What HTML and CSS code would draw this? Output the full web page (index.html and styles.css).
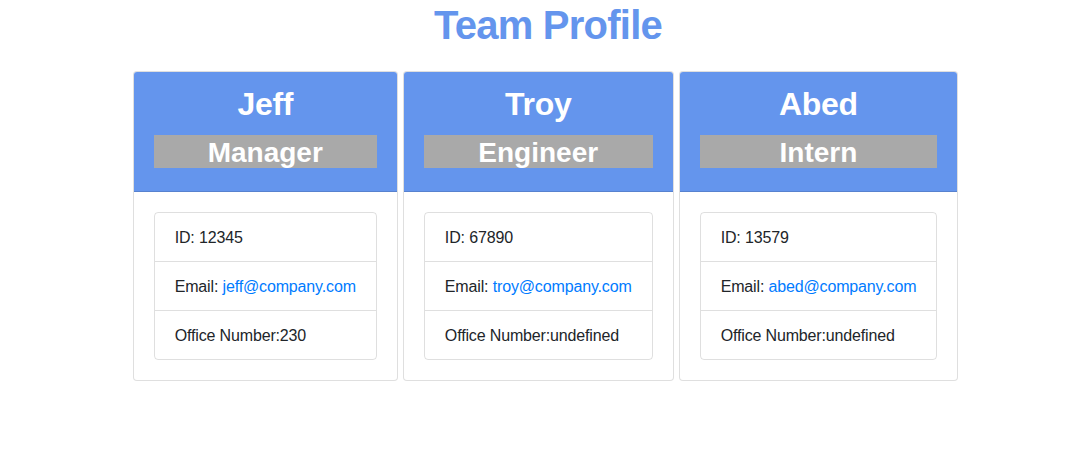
FILE: index.html
```html
<!DOCTYPE html>
<html lang="en">
<head>
<meta charset="UTF-8">
<title>Team Profile</title>
<link rel="stylesheet" href="styles.css">
</head>
<body>
<h1 class="title">Team Profile</h1>
<div class="team">
  <div class="card">
    <div class="card-header">
      <h2 class="name">Jeff</h2>
      <h3 class="role">Manager</h3>
    </div>
    <div class="card-body">
      <ul class="list">
        <li class="item">ID: 12345</li>
        <li class="item">Email: <a class="link" href="#">jeff@company.com</a></li>
        <li class="item">Office Number:230</li>
      </ul>
    </div>
  </div>
  <div class="card">
    <div class="card-header">
      <h2 class="name">Troy</h2>
      <h3 class="role">Engineer</h3>
    </div>
    <div class="card-body">
      <ul class="list">
        <li class="item">ID: 67890</li>
        <li class="item">Email: <a class="link" href="#">troy@company.com</a></li>
        <li class="item">Office Number:undefined</li>
      </ul>
    </div>
  </div>
  <div class="card">
    <div class="card-header">
      <h2 class="name">Abed</h2>
      <h3 class="role">Intern</h3>
    </div>
    <div class="card-body">
      <ul class="list">
        <li class="item">ID: 13579</li>
        <li class="item">Email: <a class="link" href="#">abed@company.com</a></li>
        <li class="item">Office Number:undefined</li>
      </ul>
    </div>
  </div>
</div>
</body>
</html>
```
FILE: styles.css
```css
* { box-sizing: border-box; }
body {
  margin: 0;
  font-family: "Liberation Sans", Arial, sans-serif;
  font-size: 16px;
  line-height: 1.5;
  color: #212529;
  background: #fff;
}
.title {
  margin: 0 0 22px;
  padding: 1px 0 0 8px;
  height: 49px;
  text-align: center;
  font-size: 40px;
  line-height: 48px;
  font-weight: 700;
  color: #6495ed;
  letter-spacing: -0.75px;
}
.team {
  display: flex;
  justify-content: center;
  align-items: flex-start;
  gap: 5px;
  padding-left: 3px;
}
.card {
  border: 1px solid rgba(0,0,0,.125);
  border-radius: 4px;
  background: #fff;
}
.card-header {
  background: #6495ed;
  padding: 13px 20px 11px;
  border-bottom: 1px solid rgba(0,0,0,.125);
  border-radius: 3px 3px 0 0;
  text-align: center;
  color: #fff;
}
.name {
  margin: 0 0 12px;
  font-size: 32px;
  line-height: 38px;
  font-weight: 700;
  letter-spacing: -0.3px;
}
.role {
  margin: 0 0 12px;
  padding-top: 2px;
  height: 33px;
  background: #a9a9a9;
  font-size: 28px;
  line-height: 31px;
  font-weight: 700;
}
.card-body {
  padding: 20px;
}
.list {
  list-style: none;
  margin: 0;
  padding: 0;
  border: 1px solid rgba(0,0,0,.125);
  border-radius: 4px;
}
.item {
  padding: 13px 20px 11px;
  line-height: 24px;
  white-space: nowrap;
  letter-spacing: -0.15px;
}
.item + .item {
  border-top: 1px solid rgba(0,0,0,.125);
}
.link {
  color: #007bff;
  text-decoration: none;
}
```
